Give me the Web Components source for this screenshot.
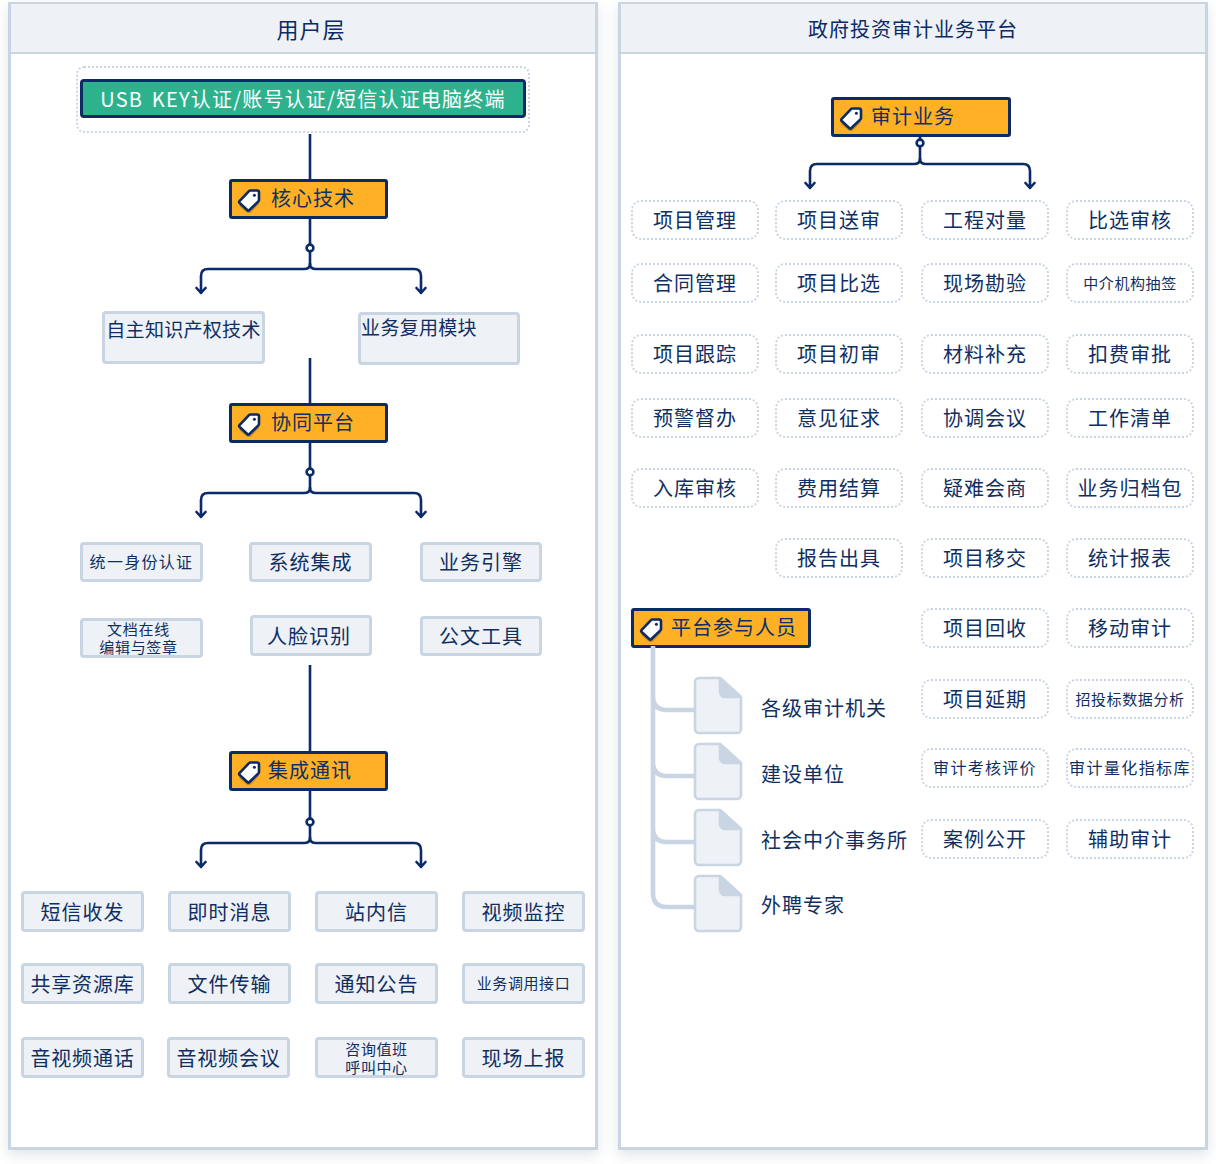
<!DOCTYPE html>
<html lang="zh"><head><meta charset="utf-8"><title>架构图</title>
<style>
html,body{margin:0;background:#fff}
body{font-family:"Noto Sans CJK SC","Liberation Sans",sans-serif;color:#0f2f63;width:1216px;height:1164px;overflow:hidden}
</style></head><body>
<x-page></x-page>
<script>
const NAVY='#0b2a66',LINE='#c9d5e3',PALE='#eef1f5';
function place(el){const [x,y,w,h]=(el.getAttribute('at')||'0,0,0,0').split(',').map(Number);
  const ox=+(el.getAttribute('ox')||0);Object.assign(el.style,{left:(x-ox-3)+'px',top:(y-4)+'px',width:w+'px',height:h+'px'});}

class XPage extends HTMLElement{constructor(){super();this.attachShadow({mode:'open'}).innerHTML=`<style>:host{display:flex;gap:20px;padding:2px 8px 0;box-sizing:border-box;width:1216px}</style><slot></slot>`}}
class XPanel extends HTMLElement{constructor(){super();this.attachShadow({mode:'open'}).innerHTML=`<style>
:host{display:flex;flex-direction:column;position:relative;width:590px;height:1148px;box-sizing:border-box;border:3px solid ${LINE};border-top-width:2px;background:#fff;box-shadow:0 5px 12px rgba(90,110,140,.18)}
header{height:50px;flex:none;box-sizing:border-box;background:${PALE};border-bottom:2px solid ${LINE};display:flex;align-items:center;justify-content:center;color:${NAVY};font-size:var(--ts,21px);letter-spacing:var(--tl,1px);padding-left:var(--tp,0)}
::slotted(*){position:absolute}
</style><header><span id="t"></span></header><slot></slot>`;}
connectedCallback(){this.shadowRoot.getElementById('t').textContent=this.getAttribute('title-text')}}
class XBox extends HTMLElement{constructor(){super();this.attachShadow({mode:'open'}).innerHTML=`<style>
:host{position:absolute;display:flex;align-items:center;justify-content:center;box-sizing:border-box;text-align:center;color:#0f2f63;font-size:20px;line-height:1.1;white-space:nowrap;letter-spacing:var(--ls,1px)}
:host([kind=solid]){background:${PALE};border:3px solid ${LINE};border-radius:4px}
:host([kind=dot]){background:#fff;border:2px dotted ${LINE};border-radius:10px}
:host([kind=plain]){align-items:center;justify-content:flex-start}
:host([kind=frame]){border:2px dotted ${LINE};border-radius:8px}
:host([kind=teal]){background:#2eb28e;border:3px solid ${NAVY};border-radius:4px;color:#fff;word-spacing:3px}
:host([kind=tag]){background:#ffb024;border:3px solid ${NAVY};border-radius:3px;justify-content:flex-start;color:#0e2f68;padding-bottom:3px}
</style><span><slot></slot></span>`}
connectedCallback(){place(this);const f=this.getAttribute('fs');if(f)this.style.fontSize=f+'px';const ls=this.getAttribute('ls');if(ls)this.style.setProperty('--ls',ls+'px');const p=this.getAttribute('pl');if(p)this.style.paddingLeft=p+'px';const lh=this.getAttribute('lh');if(lh){this.style.lineHeight=lh+'px';this.style.fontFamily='"Liberation Sans","Noto Sans CJK SC",sans-serif';this.style.paddingTop='2px'}}}
class XTag extends HTMLElement{constructor(){super();this.attachShadow({mode:'open'}).innerHTML=`<style>:host{position:absolute;display:block;left:4px;top:5px;width:26px;height:26px}svg{display:block}</style>
<svg width="26" height="26" viewBox="0 0 26 26"><path d="M14.5 5.5H21.5a1.5 1.5 0 0 1 1.5 1.5V14.5L13 25 3 16.5Z" transform="translate(0 2.5)" fill="#c98a1c"/><path d="M14.5 3.5H21a2 2 0 0 1 2 2V13a2 2 0 0 1-.6 1.4L13.4 23a1.6 1.6 0 0 1-2.2 0L3.7 16a1.6 1.6 0 0 1 0-2.2L13 4.1a2 2 0 0 1 1.5-.6Z" fill="#fff" stroke="${NAVY}" stroke-width="2.6" stroke-linejoin="round"/><circle cx="18.4" cy="8.2" r="1.5" fill="${NAVY}"/></svg>`}}
class XWire extends HTMLElement{constructor(){super();this.attachShadow({mode:'open'}).innerHTML=`<style>:host{position:absolute;display:block}svg{display:block;overflow:visible}</style><svg fill="none"></svg>`}
connectedCallback(){place(this);const s=this.shadowRoot.querySelector('svg');const [x,y,w,h]=this.getAttribute('at').split(',').map(Number);s.setAttribute('width',w);s.setAttribute('height',h);s.setAttribute('viewBox',`${x} ${y} ${w} ${h}`);s.innerHTML=this.getAttribute('draw')}}
customElements.define('x-page',XPage);customElements.define('x-panel',XPanel);customElements.define('x-box',XBox);customElements.define('x-tag',XTag);customElements.define('x-wire',XWire);

function box(ox,kind,x,y,w,h,text,o={}){const a=Object.entries(o).map(([k,v])=>` ${k}="${v}"`).join('');return `<x-box ox="${ox}" kind="${kind}" at="${x},${y},${w},${h}"${a}>${text}</x-box>`}
function tag(ox,x,y,w,h,text,pl){return `<x-box ox="${ox}" kind="tag" at="${x},${y},${w},${h}" pl="${pl}"><x-tag></x-tag>${text}</x-box>`}
function wire(ox,at,d){return `<x-wire ox="${ox}" at="${at}" draw='${d}'></x-wire>`}
function vline(ox,x,y1,y2){return wire(ox,`${x-3},${y1},6,${y2-y1}`,`<path d="M${x} ${y1}V${y2}" stroke="${NAVY}" stroke-width="2.6"/>`)}
function branch(ox,cx,top,cy,hy,l,r,bot){const A=`M${cx} ${top}V${cy-3.5}M${cx} ${cy+3.5}V${hy-5}`;
 return wire(ox,`${l-10},${top},${r-l+20},${bot-top+2}`,
 `<g stroke="${NAVY}" stroke-width="2.6" stroke-linecap="round" stroke-linejoin="round"><path d="${A}"/><path d="M${cx} ${hy-5}Q${cx} ${hy} ${cx-6} ${hy}H${l+7}Q${l} ${hy} ${l} ${hy+7}V${bot}M${l-4.5} ${bot-5}L${l} ${bot}L${l+4.5} ${bot-5}"/><path d="M${cx} ${hy-5}Q${cx} ${hy} ${cx+6} ${hy}H${r-7}Q${r} ${hy} ${r} ${hy+7}V${bot}M${r-4.5} ${bot-5}L${r} ${bot}L${r+4.5} ${bot-5}"/><circle cx="${cx}" cy="${cy}" r="3.4" fill="#fff"/></g>`)}

let L='',R='';const lo=8,ro=618;
L+=box(lo,'frame',76,66,454,67,'');
L+=box(lo,'teal',80,79,446,39,'USB KEY认证/账号认证/短信认证电脑终端',{ls:1.2});
L+=vline(lo,310,134,180);
L+=tag(lo,229,179,159,40,'核心技术',39);
L+=branch(lo,310,218,248,269,201,421,293);
L+=box(lo,'solid',102,311,163,53,'<span style="position:relative;top:-8px">自主知识产权技术</span>',{fs:19,ls:.3});
L+=box(lo,'solid',358,312,162,53,'<span style="position:relative;top:-11px;left:-20px">业务复用模块</span>',{fs:19,ls:.3});
L+=vline(lo,310,358,404);
L+=tag(lo,229,403,159,40,'协同平台',39);
L+=branch(lo,310,442,472,493,201,421,517);
L+=box(lo,'solid',80,542,123,40,'统一身份认证',{fs:16,ls:1.3});
L+=box(lo,'solid',249,542,123,40,'系统集成');
L+=box(lo,'solid',420,542,122,40,'业务引擎');
L+=box(lo,'solid',80,618,123,40,'<span style="position:relative;left:-3px">文档在线<br>编辑与签章</span>',{fs:15,ls:.7,lh:18});
L+=box(lo,'solid',250,615,122,41,'<span style="position:relative;left:-2px">人脸识别</span>');
L+=box(lo,'solid',420,616,122,40,'公文工具');
L+=vline(lo,310,665,752);
L+=tag(lo,229,751,159,40,'集成通讯',36);
L+=branch(lo,310,790,822,843,201,421,867);
const xs=[21,168,315,462],rows=[[891,['短信收发','即时消息','站内信','视频监控']],[963,['共享资源库','文件传输','通知公告','业务调用接口']],[1037,['音视频通话','音视频会议','咨询值班<br>呼叫中心','现场上报']]];
rows.forEach(([y,t])=>t.forEach((s,i)=>{const o=s.includes('br')?{fs:15,ls:.6,lh:18}:s==='业务调用接口'?{fs:15,ls:.6}:s.length===5?{ls:.8}:{};L+=box(lo,'solid',xs[i]-(s==='音视频会议'?1:0),y,123,41,s,o)}));

R+=tag(ro,831,97,180,40,'审计业务',37);
R+=branch(ro,920,137,143,164,810,1030,188);
const cx=[631,775,921,1066],T=[[200,['项目管理','项目送审','工程对量','比选审核']],[263,['合同管理','项目比选','现场勘验','中介机构抽签']],[334,['项目跟踪','项目初审','材料补充','扣费审批']],[398,['预警督办','意见征求','协调会议','工作清单']],[468,['入库审核','费用结算','疑难会商','业务归档包']],[538,['','报告出具','项目移交','统计报表']],[608,['','','项目回收','移动审计']],[679,['','','项目延期','招投标数据分析']],[748,['','','审计考核评价','审计量化指标库']],[819,['','','案例公开','辅助审计']]];
const small={'中介机构抽签':{fs:15,ls:.6},'招投标数据分析':{fs:15,ls:.6},'审计考核评价':{fs:16,ls:1.3},'审计量化指标库':{fs:16,ls:1.4}};
T.forEach(([y,t])=>t.forEach((s,i)=>{if(s)R+=box(ro,'dot',cx[i],y,128,40,s,small[s]||{})}));
R+=tag(ro,631,608,180,40,'平台参与人员',37);
R+=wire(ro,'648,646,50,270',`<path d="M653 646V${893}Q653 907 667 907H695M653 696Q653 710 667 710H695M653 762Q653 776 667 776H695M653 828Q653 842 667 842H695" stroke="${LINE}" stroke-width="4.6"/>`);
[677,743,809,875].forEach(y=>{R+=wire(ro,`692,${y-1},52,60`,`<path d="M699 ${y+1}H720L741 ${y+20}V${y+52}a4 4 0 0 1-4 4H699a4 4 0 0 1-4-4V${y+5}a4 4 0 0 1 4-4Z" fill="${PALE}" stroke="${LINE}" stroke-width="2.6" stroke-linejoin="round"/><path d="M720 ${y+1}L741 ${y+20}H725a5 5 0 0 1-5-5Z" fill="${LINE}" stroke="${LINE}" stroke-width="2.6" stroke-linejoin="round"/>`)});
[[688,'各级审计机关'],[754,'建设单位'],[820,'社会中介事务所'],[885,'外聘专家']].forEach(([y,s])=>{R+=box(ro,'plain',761,y,150,40,s)});

document.querySelector('x-page').innerHTML=`<x-panel title-text="用户层" style="--ts:22px;--tp:16px">${L}</x-panel><x-panel title-text="政府投资审计业务平台" style="--ts:20px">${R}</x-panel>`;
</script>
</body></html>
